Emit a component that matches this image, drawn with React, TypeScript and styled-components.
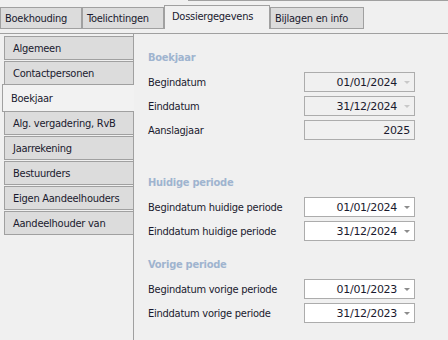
import React from "react";
import styled, { createGlobalStyle } from "styled-components";

const GlobalStyle = createGlobalStyle`
    html, body {
        margin: 0;
        padding: 0;
        background: #f0f0f0;
    }
    body {
        font-family: "DejaVu Sans Condensed", "DejaVu Sans", Tahoma, sans-serif;
        font-size: 11px;
        letter-spacing: -0.25px;
        color: #1a1a2e;
    }
`;

type TabProps = { $active?: boolean; $width: number };
type FieldProps = { $enabled?: boolean };

const topTabs = [
    { label: "Boekhouding", width: 82 },
    { label: "Toelichtingen", width: 82 },
    { label: "Dossiergegevens", width: 106, active: true },
    { label: "Bijlagen en info", width: 94 },
];

const sideTabs = [
    "Algemeen",
    "Contactpersonen",
    "Boekjaar",
    "Alg. vergadering, RvB",
    "Jaarrekening",
    "Bestuurders",
    "Eigen Aandeelhouders",
    "Aandeelhouder van",
];

type Row = { label: string; value: string; enabled?: boolean; noArrow?: boolean };

const groups: { title: string; gap: number; rows: Row[] }[] = [
    {
        title: "Boekjaar",
        gap: 0,
        rows: [
            { label: "Begindatum", value: "01/01/2024" },
            { label: "Einddatum", value: "31/12/2024" },
            { label: "Aanslagjaar", value: "2025", noArrow: true },
        ],
    },
    {
        title: "Huidige periode",
        gap: 29,
        rows: [
            { label: "Begindatum huidige periode", value: "01/01/2024", enabled: true },
            { label: "Einddatum huidige periode", value: "31/12/2024", enabled: true },
        ],
    },
    {
        title: "Vorige periode",
        gap: 10,
        rows: [
            { label: "Begindatum vorige periode", value: "01/01/2023", enabled: true },
            { label: "Einddatum vorige periode", value: "31/12/2023", enabled: true },
        ],
    },
];

export default function App() {
    return (
        <>
            <GlobalStyle />
            <Window>
                <TopEdge />
                <TabStrip>
                    {topTabs.map((t) => (
                        <TopTab key={t.label} $active={t.active} $width={t.width}>
                            {t.label}
                        </TopTab>
                    ))}
                </TabStrip>
                <Body>
                    <SideNav>
                        {sideTabs.map((s, i) => (
                            <SideTab key={s} $active={i === 2}>
                                {s}
                            </SideTab>
                        ))}
                    </SideNav>
                    <Panel>
                        {groups.map((g) => (
                            <Group key={g.title} style={{ marginTop: g.gap }}>
                                <Heading>{g.title}</Heading>
                                {g.rows.map((r) => (
                                    <FieldRow key={r.label}>
                                        <Label>{r.label}</Label>
                                        <Field $enabled={r.enabled}>
                                            <span>{r.value}</span>
                                            {!r.noArrow && <Arrow $enabled={r.enabled} />}
                                        </Field>
                                    </FieldRow>
                                ))}
                            </Group>
                        ))}
                    </Panel>
                </Body>
            </Window>
        </>
    );
}

const Window = styled.div`
    width: 448px;
    height: 340px;
    overflow: hidden;
    display: flex;
    flex-direction: column;
    background: #f0f0f0;
`;

const TopEdge = styled.div`
    height: 0;
    margin-left: 188px;
    border-left: 1px solid #a0a0a0;
    border-bottom: 1px solid #a0a0a0;
`;

const TabStrip = styled.div`
    display: flex;
    align-items: flex-end;
    height: 24px;
    padding: 4px 0;
    border-bottom: 1px solid #a0a0a0;
`;

const TopTab = styled.div<TabProps>`
    box-sizing: border-box;
    width: ${(p) => p.$width}px;
    height: ${(p) => (p.$active ? 24 : 22)}px;
    display: flex;
    align-items: center;
    padding: ${(p) => (p.$active ? "0 0 2px 7px" : "0 0 0 4px")};
    border: 1px solid #a0a0a0;
    border-bottom: ${(p) => (p.$active ? "none" : "1px solid #a0a0a0")};
    background: ${(p) => (p.$active ? "#f0f0f0" : "#dcdcdc")};
    white-space: nowrap;
`;

const Body = styled.div`
    flex: 1;
    display: flex;
`;

const SideNav = styled.div`
    width: 133px;
    padding-top: 2px;
    display: flex;
    flex-direction: column;
`;

const SideTab = styled.div<{ $active?: boolean }>`
    box-sizing: border-box;
    position: relative;
    z-index: ${(p) => (p.$active ? 1 : 0)};
    height: ${(p) => (p.$active ? 28 : 24)}px;
    margin: ${(p) => (p.$active ? "-2px -1px -1px 2px" : "0 0 1px 4px")};
    padding-left: 8px;
    display: flex;
    align-items: center;
    border: 1px solid #a0a0a0;
    border-right: none;
    background: ${(p) => (p.$active ? "#f2f2f2" : "#dcdcdc")};
    white-space: nowrap;
`;

const Panel = styled.div`
    flex: 1;
    border-left: 1px solid #a0a0a0;
    padding: 12px 0 0 14px;
`;

const Group = styled.div`
    display: flex;
    flex-direction: column;
`;

const Heading = styled.div`
    height: 24px;
    line-height: 24px;
    font-weight: bold;
    color: #9fb4cf;
`;

const FieldRow = styled.div`
    height: 24px;
    display: flex;
    align-items: center;
`;

const Label = styled.div`
    width: 156px;
    white-space: nowrap;
`;

const Field = styled.div<FieldProps>`
    box-sizing: border-box;
    width: 111px;
    height: 20px;
    display: flex;
    align-items: center;
    justify-content: flex-end;
    padding-right: 4px;
    border: 1px solid #acacac;
    background: ${(p) => (p.$enabled ? "#ffffff" : "#f0f0f0")};
    font-family: "DejaVu Sans", Tahoma, sans-serif;
    letter-spacing: -0.3px;
`;

const Arrow = styled.div<FieldProps>`
    width: 0;
    height: 0;
    margin-left: 7px;
    border-left: 3px solid transparent;
    border-right: 3px solid transparent;
    border-top: 3px solid ${(p) => (p.$enabled ? "#8c8c8c" : "#c8c8c8")};
`;
